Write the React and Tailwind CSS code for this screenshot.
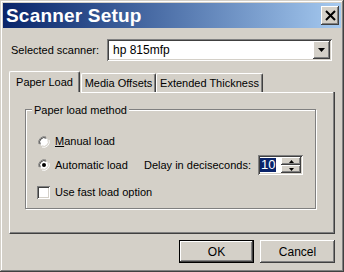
import React from 'react';

const raised = 'shadow-[inset_-1px_-1px_#404040,inset_1px_1px_#ffffff,inset_-2px_-2px_#808080]';
const sunken = 'shadow-[inset_1px_1px_#808080,inset_-1px_-1px_#ffffff,inset_2px_2px_#404040,inset_-2px_-2px_#d4d0c8]';

function Radio({ checked }) {
  return (
    <svg width="12" height="12" viewBox="0 0 12 12" className="shrink-0">
      <path d="M8 1 A5.5 5.5 0 0 0 1 8" fill="none" stroke="#808080" strokeWidth="1" />
      <path d="M4 11 A5.5 5.5 0 0 0 11 4" fill="none" stroke="#ffffff" strokeWidth="1" />
      <circle cx="6" cy="6" r="4.5" fill="#ffffff" />
      <path d="M8.3 2.2 A4.5 4.5 0 0 0 2.2 8.3" fill="none" stroke="#404040" strokeWidth="1" />
      <path d="M3.7 9.8 A4.5 4.5 0 0 0 9.8 3.7" fill="none" stroke="#d4d0c8" strokeWidth="1" />
      {checked && <circle cx="6" cy="6" r="2" fill="#000000" />}
    </svg>
  );
}

export default function App() {
  return (
    <div
      className={`w-[344px] h-[272px] bg-[#d4d0c8] p-[3px] flex flex-col text-[11px] text-black shadow-[inset_-1px_-1px_#404040,inset_1px_1px_#d4d0c8,inset_-2px_-2px_#808080,inset_2px_2px_#ffffff]`}
      style={{ fontFamily: '"Liberation Sans", Arial, sans-serif' }}
    >
      {/* Title bar */}
      <div className="h-[25px] flex items-center justify-between bg-gradient-to-r from-[#0a246a] to-[#a6caf0] pl-[3px] pr-[2px]">
        <span className="text-white font-bold text-[19px] leading-none tracking-[0.2px]">Scanner Setup</span>
        <div className={`w-[18px] h-[19px] bg-[#d4d0c8] flex items-center justify-center ${raised}`}>
          <svg width="11" height="11" viewBox="0 0 11 11">
            <path d="M1 1 L10 10 M10 1 L1 10" stroke="#000" strokeWidth="2" />
          </svg>
        </div>
      </div>

      {/* Scanner select */}
      <div className="flex items-center mt-[11px] pl-[8px]">
        <span className="w-[96px]">Selected scanner:</span>
        <div className={`w-[225px] h-[22px] bg-white flex items-center p-[2px] ${sunken}`}>
          <span className="flex-1 pl-[4px] text-[12px]">hp 815mfp</span>
          <div className={`w-[17px] h-[18px] bg-[#d4d0c8] flex items-center justify-center ${raised}`}>
            <svg width="7" height="4" viewBox="0 0 7 4">
              <path d="M0 0 H7 L3.5 4 Z" fill="#000" />
            </svg>
          </div>
        </div>
      </div>

      {/* Tabs */}
      <div className="mt-[10px] mx-[6px] flex items-end">
        <div className="w-[71px] h-[21px] flex items-center justify-center border-l border-t border-white rounded-t-[2px] border-r border-r-[#404040] shadow-[inset_-1px_0_#808080]">
          Paper Load
        </div>
        <div className="ml-[1px] w-[75px] h-[19px] flex items-center justify-center border-l border-t border-white rounded-t-[2px] border-r border-r-[#404040] shadow-[inset_-1px_0_#808080,0_1px_#ffffff]">
          Media Offsets
        </div>
        <div className="w-[107px] h-[19px] flex items-center justify-center border-l border-t border-white rounded-t-[2px] border-r border-r-[#404040] shadow-[inset_-1px_0_#808080,0_1px_#ffffff]">
          Extended Thickness
        </div>
        <div className="flex-1 h-px shadow-[0_1px_#ffffff]" />
      </div>
      <div className="mx-[6px] h-[142px] border-l border-white border-r border-b border-r-[#404040] border-b-[#404040] shadow-[inset_-1px_-1px_#808080] pt-[17px] pl-[15px]">
        <div className="relative w-[291px] h-[100px] border border-[#808080] shadow-[inset_1px_1px_#ffffff,1px_1px_#ffffff] pl-[11px] flex flex-col">
          <span className="absolute -top-[8px] left-[6px] px-[2px] bg-[#d4d0c8]">Paper load method</span>

          <div className="mt-[25px] h-[13px] flex items-center">
            <div className="w-[13px] flex justify-center"><Radio /></div>
            <span className="ml-[5px]"><span className="underline">M</span>anual load</span>
          </div>

          <div className="mt-[7px] h-[20px] flex items-center">
            <div className="w-[13px] flex justify-center"><Radio checked /></div>
            <span className="ml-[5px] w-[89px]">Automatic load</span>
            <span className="w-[114px]">Delay in deciseconds:</span>
            <div className={`w-[45px] h-[20px] bg-white flex items-center p-[2px] ${sunken}`}>
              <div className="flex-1 flex items-center">
                <span className="bg-[#0a246a] text-white text-[13px] leading-[14px] px-[1px]">10</span>
              </div>
              <div className="w-[20px] h-full flex flex-col">
                <div className={`flex-1 bg-[#d4d0c8] flex items-center justify-center ${raised}`}>
                  <svg width="5" height="3" viewBox="0 0 5 3"><path d="M2.5 0 L5 3 H0 Z" fill="#000" /></svg>
                </div>
                <div className={`flex-1 bg-[#d4d0c8] flex items-center justify-center ${raised}`}>
                  <svg width="5" height="3" viewBox="0 0 5 3"><path d="M0 0 H5 L2.5 3 Z" fill="#000" /></svg>
                </div>
              </div>
            </div>
          </div>

          <div className="mt-[11px] h-[13px] flex items-center">
            <div className={`w-[13px] h-[13px] bg-white ${sunken}`} />
            <span className="ml-[5px]">Use fast load option</span>
          </div>
        </div>
      </div>

      {/* Buttons */}
      <div className="mt-[6px] flex justify-end gap-[6px] pr-[6px]">
        <button className="w-[75px] h-[23px] bg-[#d4d0c8] border border-black shadow-[inset_-1px_-1px_#404040,inset_1px_1px_#ffffff,inset_-2px_-2px_#808080] text-[12px]">
          OK
        </button>
        <button className={`w-[75px] h-[23px] bg-[#d4d0c8] text-[12px] ${raised}`}>
          Cancel
        </button>
      </div>
    </div>
  );
}
